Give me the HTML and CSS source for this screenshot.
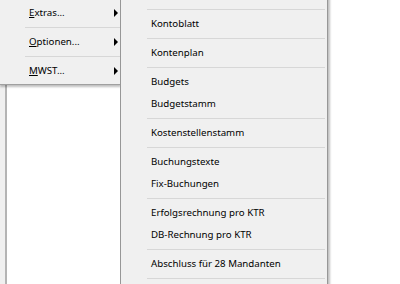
FILE: index.html
```html
<!DOCTYPE html>
<html lang="de">
<head>
  <meta charset="UTF-8" />
  <title>Menü</title>
  <link rel="stylesheet" href="styles.css">
</head>
<body>

  <div class="sidebar">
    <div class="panel"></div>
  </div>

  <!-- Hauptmenü -->
  <div class="menu menu-left">
    <div class="item"><span><u>E</u>xtras...</span><span class="arrow"></span></div>
    <div class="sep"></div>
    <div class="item"><span><u>O</u>ptionen...</span><span class="arrow"></span></div>
    <div class="sep"></div>
    <div class="item"><span><u>M</u>WST...</span><span class="arrow"></span></div>
  </div>

  <!-- Untermenü -->
  <div class="menu menu-right">
    <div class="item">Saldoliste und Erfolgsrechnung</div>
    <div class="sep"></div>
    <div class="item">Kontoblatt</div>
    <div class="sep"></div>
    <div class="item">Kontenplan</div>
    <div class="sep"></div>
    <div class="item">Budgets</div>
    <div class="item">Budgetstamm</div>
    <div class="sep"></div>
    <div class="item">Kostenstellenstamm</div>
    <div class="sep"></div>
    <div class="item">Buchungstexte</div>
    <div class="item">Fix-Buchungen</div>
    <div class="sep"></div>
    <div class="item">Erfolgsrechnung pro KTR</div>
    <div class="item">DB-Rechnung pro KTR</div>
    <div class="sep"></div>
    <div class="item">Abschluss für 28 Mandanten</div>
    <div class="sep"></div>
  </div>

</body>
</html>
```

FILE: styles.css
```css
* {
  margin: 0;
  padding: 0;
  box-sizing: border-box;
}

body {
  width: 400px;
  height: 284px;
  overflow: hidden;
  position: relative;
  background: #ffffff;
  font-family: 'Noto Sans', 'Segoe UI', sans-serif;
  font-size: 9.7px;
  color: #000000;
}

.sidebar {
  width: 121px;
  height: 100%;
  background: #f0f0f0;
  padding-left: 5px;
}

.panel {
  height: 100%;
  background: #ffffff;
  border-left: 2px solid #b4b4b4;
}

.menu {
  position: absolute;
  background: #f0f0f0;
}

.menu-left {
  top: 0;
  left: 0;
  width: 121px;
  padding: 2px 0 2px 0;
  border-bottom: 1px solid #a0a0a0;
  box-shadow: 0 2px 2px rgba(0, 0, 0, 0.25);
}

.menu-right {
  top: -19px;
  left: 120px;
  width: 208px;
  height: 330px;
  padding-top: 3px;
  border-left: 1px solid #979797;
  border-right: 1px solid #979797;
  box-shadow: 2px 0 2px rgba(0, 0, 0, 0.25);
}

.item {
  height: 22px;
  line-height: 22px;
  white-space: nowrap;
}

.menu-left .item {
  display: flex;
  justify-content: space-between;
  align-items: center;
  padding-left: 29px;
  padding-right: 3px;
}

.menu-right .item {
  padding-left: 30px;
}

.arrow {
  width: 0;
  height: 0;
  border-left: 4px solid #000000;
  border-top: 4px solid transparent;
  border-bottom: 4px solid transparent;
}

.sep {
  height: 1px;
  background: #d7d7d7;
  margin: 3px 0 3px 0;
}

.menu-left .sep {
  margin-left: 25px;
}

.menu-right .sep {
  margin-left: 26px;
  margin-right: 2px;
}
```
